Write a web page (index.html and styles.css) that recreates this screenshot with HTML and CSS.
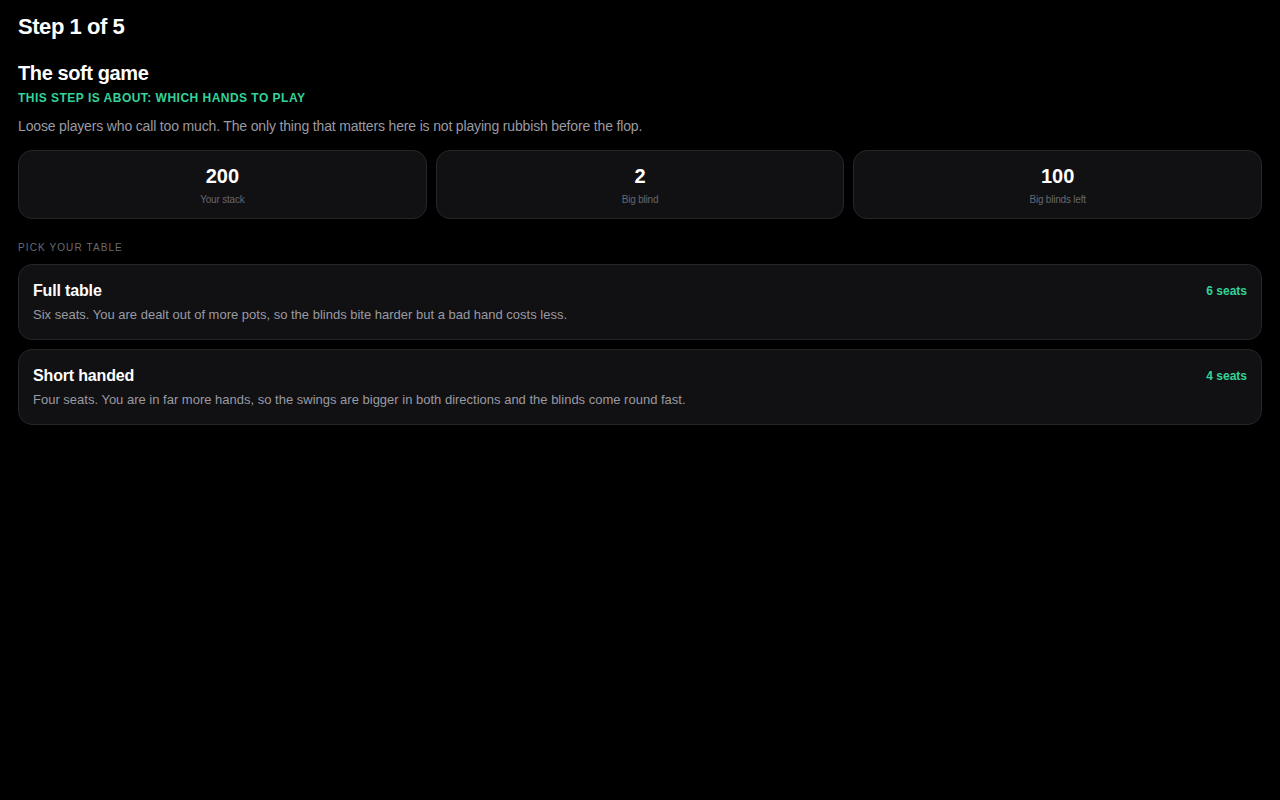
FILE: index.html
```html
<!DOCTYPE html>
<html lang="en">
<head>
<meta charset="utf-8">
<title>Step 1 of 5</title>
<link rel="stylesheet" href="styles.css">
</head>
<body>
<main class="page">
  <h1 class="step">Step 1 of 5</h1>
  <section class="intro">
    <h2 class="game-title">The soft game</h2>
    <p class="focus">This step is about: which hands to play</p>
    <p class="desc">Loose players who call too much. The only thing that matters here is not playing rubbish before the flop.</p>
  </section>
  <div class="stats">
    <div class="stat"><div class="stat-value">200</div><div class="stat-label">Your stack</div></div>
    <div class="stat"><div class="stat-value">2</div><div class="stat-label">Big blind</div></div>
    <div class="stat"><div class="stat-value">100</div><div class="stat-label">Big blinds left</div></div>
  </div>
  <div class="section-label">Pick your table</div>
  <div class="tables">
    <div class="table-card">
      <div class="table-head"><span class="table-name">Full table</span><span class="seats">6 seats</span></div>
      <p class="table-desc">Six seats. You are dealt out of more pots, so the blinds bite harder but a bad hand costs less.</p>
    </div>
    <div class="table-card">
      <div class="table-head"><span class="table-name">Short handed</span><span class="seats">4 seats</span></div>
      <p class="table-desc">Four seats. You are in far more hands, so the swings are bigger in both directions and the blinds come round fast.</p>
    </div>
  </div>
</main>
</body>
</html>
```

FILE: styles.css
```css
* { box-sizing: border-box; }
html, body { margin: 0; padding: 0; background: #000; }
body {
  font-family: "Liberation Sans", Arial, sans-serif;
  color: #fff;
}
.page {
  padding: 14px 18px 18px;
  display: flex;
  flex-direction: column;
}
.step {
  margin: 0;
  font-size: 22px;
  font-weight: 700;
  letter-spacing: -0.02em;
  line-height: 26px;
}
.intro { margin-top: 21px; }
.game-title {
  margin: 0;
  font-size: 20px;
  font-weight: 700;
  letter-spacing: -0.02em;
  line-height: 24px;
}
.focus {
  margin: 5px 0 0;
  font-size: 12px;
  font-weight: 700;
  text-transform: uppercase;
  letter-spacing: 0.04em;
  color: #34d399;
  line-height: 16px;
}
.desc {
  margin: 10px 0 0;
  font-size: 14px;
  color: #9a9aa2;
  line-height: 20px;
  letter-spacing: -0.16px;
}
.stats {
  margin-top: 14px;
  display: grid;
  grid-template-columns: repeat(3, 1fr);
  gap: 9px;
}
.stat {
  background: #111113;
  border: 1px solid #26262a;
  border-radius: 14px;
  height: 69px;
  display: flex;
  flex-direction: column;
  align-items: center;
  padding-top: 13px;
}
.stat-value {
  font-size: 20px;
  font-weight: 700;
  line-height: 24px;
}
.stat-label {
  margin-top: 6px;
  font-size: 10px;
  color: #66666e;
  line-height: 12px;
  letter-spacing: -0.02em;
}
.section-label {
  margin-top: 23px;
  font-size: 10px;
  letter-spacing: 0.11em;
  text-transform: uppercase;
  color: #6a6a72;
  line-height: 12px;
}
.tables {
  margin-top: 10px;
  display: flex;
  flex-direction: column;
  gap: 9px;
}
.table-card {
  background: #111113;
  border: 1px solid #26262a;
  border-radius: 14px;
  padding: 16px 14px 14px;
  height: 76px;
}
.table-head {
  display: flex;
  justify-content: space-between;
  align-items: center;
}
.table-name {
  font-size: 16px;
  font-weight: 700;
  line-height: 20px;
  letter-spacing: -0.01em;
}
.seats {
  font-size: 12px;
  font-weight: 700;
  color: #34d399;
}
.table-desc {
  margin: 5px 0 0;
  font-size: 13px;
  color: #9a9aa2;
  line-height: 18px;
}
```
